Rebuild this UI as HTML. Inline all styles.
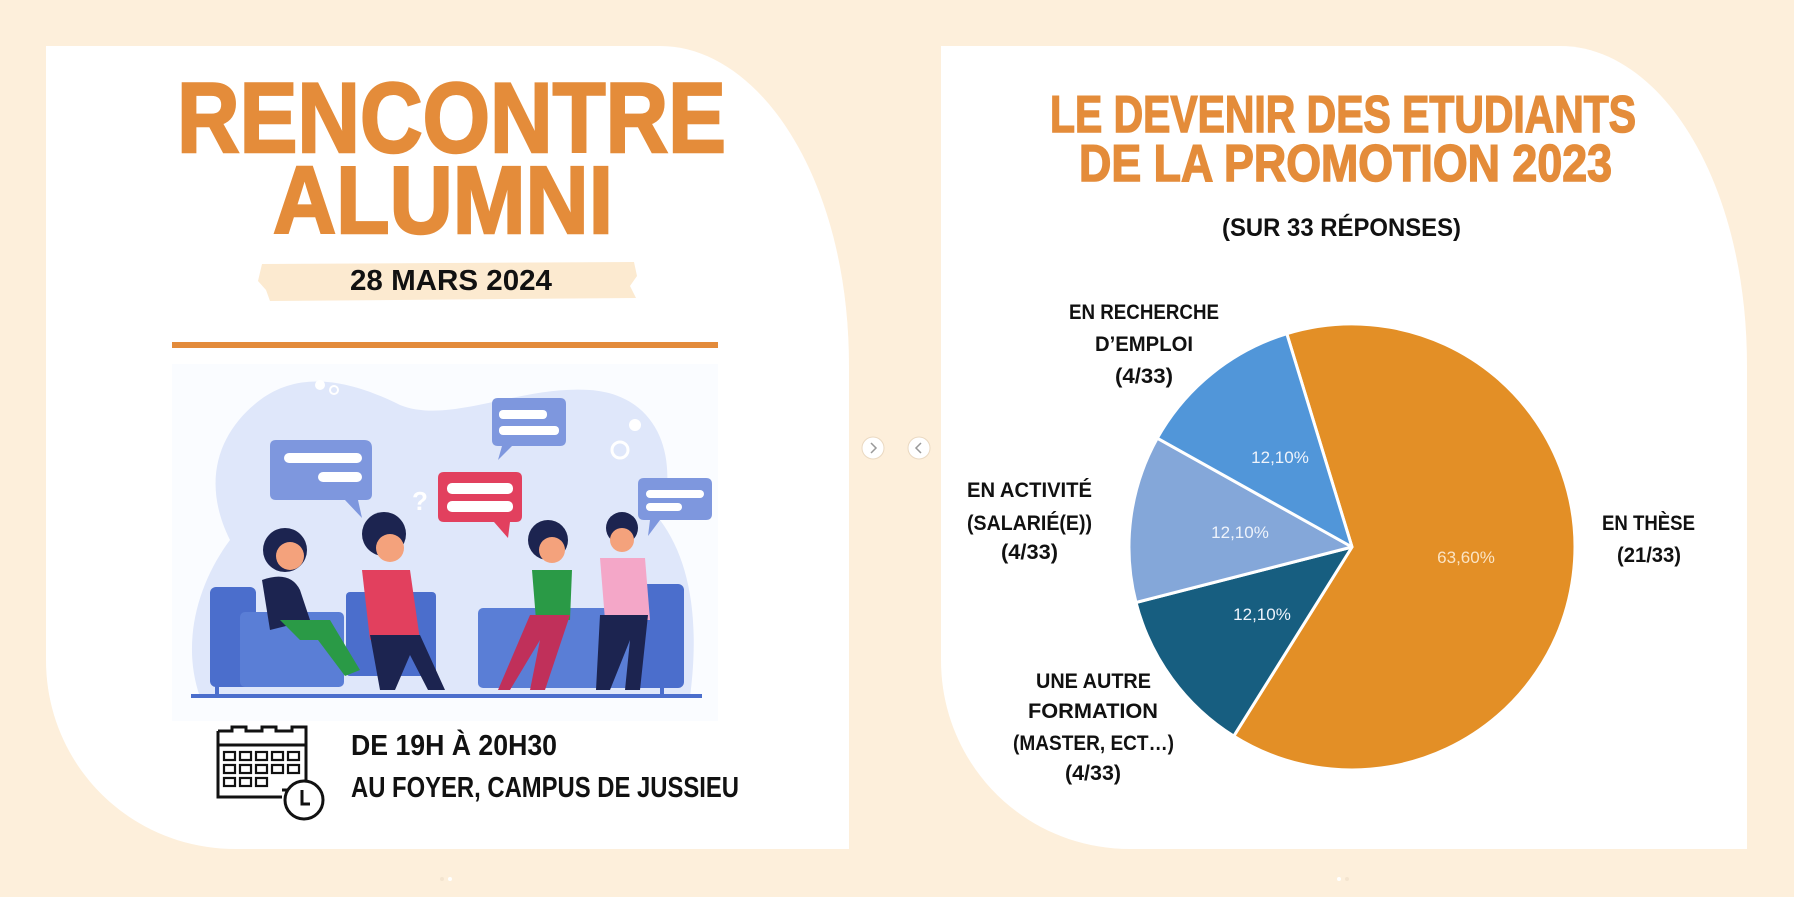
<!DOCTYPE html>
<html><head><meta charset="utf-8"><style>
html,body{margin:0;padding:0;background:#fdefdb;}
svg{display:block}
.t{font-family:"Liberation Sans",sans-serif;font-weight:bold}
.n{font-family:"Liberation Sans Narrow","Liberation Sans",sans-serif;font-weight:bold}
</style></head><body>
<svg width="1794" height="897" viewBox="0 0 1794 897" xmlns="http://www.w3.org/2000/svg">
<rect width="1794" height="897" fill="#fdefdb"/>
<path d="M46 46 H660 C760 46 849 180 849 366 V849 H236 C130 849 46 765 46 660 Z" fill="#fff"/>
<path d="M941 46 H1560 C1660 46 1747 180 1747 366 V849 H1130 C1025 849 941 765 941 660 Z" fill="#fff"/>

<text class="t" x="177" y="152" font-size="99" fill="#e48c3a" stroke="#e48c3a" stroke-width="2.5" textLength="549" lengthAdjust="spacingAndGlyphs">RENCONTRE</text>
<text class="t" x="273" y="233" font-size="96" fill="#e48c3a" stroke="#e48c3a" stroke-width="2.5" textLength="340" lengthAdjust="spacingAndGlyphs">ALUMNI</text>
<path d="M262 264 L634 262 L637 276 L630 286 L636 298 L270 301 L266 290 L258 281 Z" fill="#fcead0"/>
<text class="n" x="350" y="290" font-size="29" fill="#111" textLength="202" lengthAdjust="spacingAndGlyphs">28 MARS 2024</text>
<rect x="172" y="342" width="546" height="6" fill="#e38b3b"/>

<rect x="172" y="364" width="546" height="357" fill="#fafcff"/>
<path d="M260 400 C300 370 350 380 400 405 C450 425 520 385 590 390 C660 395 680 460 660 520 C690 560 700 620 690 697 H200 C180 640 200 580 230 540 C200 480 220 430 260 400 Z" fill="#dfe7fa"/>
<circle cx="320" cy="385" r="5" fill="#fff"/><circle cx="334" cy="390" r="4" fill="none" stroke="#fff" stroke-width="2"/>
<circle cx="620" cy="450" r="8" fill="none" stroke="#fff" stroke-width="3"/><circle cx="635" cy="425" r="6" fill="#fff"/>
<path d="M276 440 H364 Q372 440 372 448 V494 Q372 500 366 500 H358 L362 518 L345 500 H276 Q270 500 270 494 V446 Q270 440 276 440 Z" fill="#7e97de"/>
<rect x="284" y="453" width="78" height="10" rx="5" fill="#fff"/><rect x="318" y="472" width="44" height="10" rx="5" fill="#fff"/>
<path d="M498 398 H560 Q566 398 566 404 V440 Q566 446 560 446 H512 L498 460 L502 446 H498 Q492 446 492 440 V404 Q492 398 498 398 Z" fill="#7e97de"/>
<rect x="499" y="410" width="48" height="9" rx="4" fill="#fff"/><rect x="499" y="426" width="60" height="9" rx="4" fill="#fff"/>
<path d="M444 472 H516 Q522 472 522 478 V516 Q522 522 516 522 H510 L508 538 L494 522 H444 Q438 522 438 516 V478 Q438 472 444 472 Z" fill="#e2405e"/>
<rect x="447" y="483" width="66" height="11" rx="5" fill="#fff"/><rect x="447" y="501" width="66" height="11" rx="5" fill="#fff"/>
<path d="M644 478 H706 Q712 478 712 484 V514 Q712 520 706 520 H660 L648 536 L650 520 H644 Q638 520 638 514 V484 Q638 478 644 478 Z" fill="#7e97de"/>
<rect x="646" y="490" width="58" height="8" rx="4" fill="#fff"/><rect x="646" y="503" width="36" height="8" rx="4" fill="#fff"/>
<text class="t" x="412" y="510" font-size="26" fill="#fff">?</text>
<rect x="210" y="587" width="46" height="100" rx="6" fill="#4b6ecc"/>
<rect x="240" y="612" width="104" height="75" rx="5" fill="#5a7ed6"/>
<rect x="346" y="592" width="90" height="84" rx="4" fill="#4b6ecc"/>
<rect x="478" y="608" width="160" height="80" rx="5" fill="#5a7ed6"/>
<rect x="632" y="584" width="52" height="104" rx="6" fill="#4b6ecc"/>
<rect x="191" y="694" width="511" height="4" fill="#4b6ecc"/>
<rect x="215" y="686" width="4" height="10" fill="#4b6ecc"/><rect x="660" y="686" width="4" height="10" fill="#4b6ecc"/>
<circle cx="285" cy="550" r="22" fill="#1c2450"/><circle cx="290" cy="556" r="14" fill="#f4a27c"/>
<path d="M262 580 Q290 570 300 590 L310 620 L270 630 Z" fill="#1c2450"/>
<path d="M280 620 L330 620 L360 670 L345 676 L318 640 L300 640 Z" fill="#2a9a46"/>
<circle cx="384" cy="534" r="22" fill="#1c2450"/><circle cx="390" cy="548" r="14" fill="#f4a27c"/>
<path d="M362 570 H410 L420 640 H370 Z" fill="#e2405e"/>
<path d="M370 635 H420 L445 690 H428 L410 655 L395 690 H380 Z" fill="#1c2450"/>
<circle cx="548" cy="540" r="20" fill="#1c2450"/><circle cx="552" cy="550" r="13" fill="#f4a27c"/>
<path d="M532 570 H572 L570 620 H536 Z" fill="#2a9a46"/>
<path d="M530 615 L570 615 L545 690 L530 690 L540 640 L510 690 H498 Z" fill="#c0305a"/>
<circle cx="622" cy="528" r="16" fill="#1c2450"/><circle cx="622" cy="540" r="12" fill="#f4a27c"/>
<path d="M600 558 H645 L650 620 H605 Z" fill="#f4a7c8"/>
<path d="M600 615 H648 L640 690 H625 L630 640 L610 690 H596 Z" fill="#1c2450"/>

<g fill="none" stroke="#111" stroke-width="3">
<path d="M218 731 H232 V727 H246 V731 H262 V727 H276 V731 H292 V727 H306 V790 H282"/>
<path d="M218 731 V797 H282"/>
<line x1="218" y1="745" x2="306" y2="745"/>
<g stroke-width="2.2">
<rect x="224" y="752" width="11" height="8"/><rect x="240" y="752" width="11" height="8"/><rect x="256" y="752" width="11" height="8"/><rect x="272" y="752" width="11" height="8"/><rect x="288" y="752" width="11" height="8"/>
<rect x="224" y="765" width="11" height="8"/><rect x="240" y="765" width="11" height="8"/><rect x="256" y="765" width="11" height="8"/><rect x="272" y="765" width="11" height="8"/><rect x="288" y="765" width="11" height="8"/>
<rect x="224" y="778" width="11" height="8"/><rect x="240" y="778" width="11" height="8"/><rect x="256" y="778" width="11" height="8"/>
</g>
<circle cx="304" cy="800" r="19" fill="#fff"/>
<path d="M302 790 V804 H310"/>
</g>
<text class="n" x="351" y="755" font-size="29" fill="#111" textLength="206" lengthAdjust="spacingAndGlyphs">DE 19H À 20H30</text>
<text class="n" x="351" y="797" font-size="29" fill="#111" textLength="388" lengthAdjust="spacingAndGlyphs">AU FOYER, CAMPUS DE JUSSIEU</text>

<circle cx="873" cy="448" r="11" fill="#fff" stroke="#ead9c2"/>
<path d="M871 443 L876 448 L871 453" fill="none" stroke="#999" stroke-width="1.5"/>
<circle cx="919" cy="448" r="11" fill="#fff" stroke="#ead9c2"/>
<path d="M921 443 L916 448 L921 453" fill="none" stroke="#999" stroke-width="1.5"/>
<circle cx="442" cy="879" r="2" fill="#f4e4cf"/><circle cx="450" cy="879" r="2" fill="#fff"/>
<circle cx="1339" cy="879" r="2" fill="#fff"/><circle cx="1347" cy="879" r="2" fill="#f4e4cf"/>

<text class="t" x="1050" y="132" font-size="52" fill="#e48c3a" stroke="#e48c3a" stroke-width="1.5" textLength="586" lengthAdjust="spacingAndGlyphs">LE DEVENIR DES ETUDIANTS</text>
<text class="t" x="1079" y="181" font-size="52" fill="#e48c3a" stroke="#e48c3a" stroke-width="1.5" textLength="533" lengthAdjust="spacingAndGlyphs">DE LA PROMOTION 2023</text>
<text class="n" x="1222" y="236" font-size="25" fill="#111" textLength="239" lengthAdjust="spacingAndGlyphs">(SUR 33 RÉPONSES)</text>

<g stroke="#fff" stroke-width="3" stroke-linejoin="round">
<path d="M1352 547 L1286.8 333.7 A223 223 0 1 1 1233.8 736.1 Z" fill="#e38f26"/>
<path d="M1352 547 L1233.8 736.1 A223 223 0 0 1 1136.0 602.5 Z" fill="#175e80"/>
<path d="M1352 547 L1136.0 602.5 A223 223 0 0 1 1157.3 438.2 Z" fill="#84a7d9"/>
<path d="M1352 547 L1157.3 438.2 A223 223 0 0 1 1286.8 333.7 Z" fill="#5196d9"/>
</g>
<g font-family="Liberation Sans,sans-serif" font-size="17" fill="#eef3fb" text-anchor="middle">
<text x="1280" y="463">12,10%</text>
<text x="1240" y="538">12,10%</text>
<text x="1262" y="620">12,10%</text>
<text x="1466" y="563" fill="#fbe4c4">63,60%</text>
</g>
<g class="n" font-size="21" fill="#111" lengthAdjust="spacingAndGlyphs">
<text x="1069" y="319" textLength="150" lengthAdjust="spacingAndGlyphs">EN RECHERCHE</text>
<text x="1095" y="351" textLength="98" lengthAdjust="spacingAndGlyphs">D’EMPLOI</text>
<text x="1115" y="383" textLength="58" lengthAdjust="spacingAndGlyphs">(4/33)</text>
<text x="967" y="497" textLength="125" lengthAdjust="spacingAndGlyphs">EN ACTIVITÉ</text>
<text x="967" y="530" textLength="125" lengthAdjust="spacingAndGlyphs">(SALARIÉ(E))</text>
<text x="1001" y="559" textLength="57" lengthAdjust="spacingAndGlyphs">(4/33)</text>
<text x="1602" y="530" textLength="93" lengthAdjust="spacingAndGlyphs">EN THÈSE</text>
<text x="1617" y="562" textLength="64" lengthAdjust="spacingAndGlyphs">(21/33)</text>
<text x="1036" y="688" textLength="115" lengthAdjust="spacingAndGlyphs">UNE AUTRE</text>
<text x="1028" y="718" textLength="130" lengthAdjust="spacingAndGlyphs">FORMATION</text>
<text x="1013" y="750" textLength="161" lengthAdjust="spacingAndGlyphs">(MASTER, ECT…)</text>
<text x="1065" y="780" textLength="56" lengthAdjust="spacingAndGlyphs">(4/33)</text>
</g>
</svg>
</body></html>
